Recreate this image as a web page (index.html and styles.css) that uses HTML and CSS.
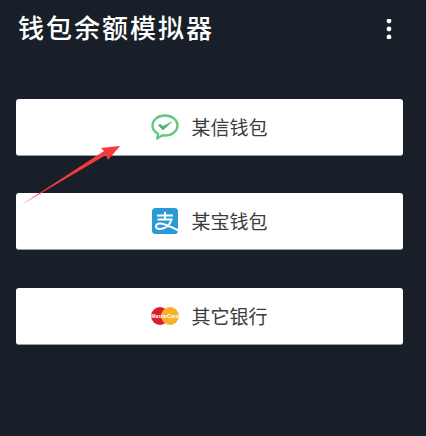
FILE: index.html
```html
<!DOCTYPE html>
<html lang="zh">
<head>
<meta charset="utf-8">
<title>钱包余额模拟器</title>
<link rel="stylesheet" href="styles.css">
</head>
<body>
<header class="bar">
  <h1 class="title">钱包余额模拟器</h1>
  <svg class="more" width="6" height="20" viewBox="0 0 6 20"><circle cx="3" cy="2" r="2.400"/><circle cx="3" cy="10" r="2.400"/><circle cx="3" cy="18" r="2.400"/></svg>
</header>
<main class="list">
  <button class="row">
    <svg class="icon" width="28" height="26" viewBox="0 0 28 26">
      <path d="M14 1.500C7 1.500 1.500 6 1.500 11.500c0 3.500 2.200 6.500 5.600 8.300l-.9 4.700 5.300-3.200c.8.100 1.600.2 2.500.2 7 0 12.500-4.500 12.500-10S21 1.500 14 1.500z" fill="none" stroke="#66c680" stroke-width="2.400" stroke-linejoin="round"/>
      <path d="M7.500 11.500l1.500-1.200 3 2.200 8.500-4.500-8.500 8z" fill="#4fb56c" stroke="#4fb56c" stroke-width=".8" stroke-linejoin="round"/>
    </svg>
    <span class="label">某信钱包</span>
  </button>
  <button class="row">
    <svg class="icon" width="28" height="26" viewBox="0 0 28 26">
      <rect x="1" width="26" height="26" rx="3.500" fill="#2a9ad6"/>
      <path d="M6 7.500h16M14 4v7.500M6.500 11.500h14c-1.500 5-5.500 9-11.500 9.500-2.500.2-4-.8-4-2.500 0-2 2-3.200 4.500-3 4 .3 10 3 18 7" fill="none" stroke="#fff" stroke-width="2"/>
    </svg>
    <span class="label">某宝钱包</span>
  </button>
  <button class="row">
    <svg class="icon" width="28" height="18" viewBox="0 0 28 18">
      <circle cx="9" cy="9" r="9" fill="#d9202c"/>
      <circle cx="19" cy="9" r="9" fill="#f7b02c"/>
      <text class="brand" x="14" y="10.800" text-anchor="middle">MasterCard</text>
    </svg>
    <span class="label">其它银行</span>
  </button>
</main>
<svg class="arrow" width="110" height="70" viewBox="0 0 110 70">
  <path d="M1 61L84 7 81 4 100 2 88 16 86 11z" fill="#f5393c"/>
</svg>
</body>
</html>
```
FILE: styles.css
```css
html, body {
  margin: 0;
  height: 100%;
}
body {
  position: relative;
  background: #181f29;
  font-family: "Roboto", "Noto Sans CJK SC", sans-serif;
  overflow: hidden;
}
.bar {
  height: 58px;
  padding: 0 34px 0 18px;
  display: flex;
  align-items: center;
  justify-content: space-between;
}
.title {
  margin: 0 0 5px;
  font-size: 26px;
  font-weight: 500;
  letter-spacing: 2px;
  color: #fff;
}
.more {
  fill: #fff;
}
.list {
  padding: 40.500px 23px 0 16px;
  display: flex;
  flex-direction: column;
  gap: 37.500px;
}
.row {
  height: 57px;
  padding: 0;
  border: 0;
  border-bottom: 1px solid #9a9da1;
  border-radius: 3px;
  background: #fff;
  display: flex;
  align-items: center;
  justify-content: center;
  gap: 12px;
  font-family: inherit;
  font-size: 19px;
  color: #3c3c3c;
  box-sizing: border-box;
}
.label {
  margin-bottom: 1px;
}
.icon {
  flex: none;
}
.brand {
  font-family: "Liberation Sans", sans-serif;
  font-size: 5px;
  font-weight: 700;
  fill: #fff;
}
.arrow {
  position: absolute;
  left: 20px;
  top: 144px;
}
```
